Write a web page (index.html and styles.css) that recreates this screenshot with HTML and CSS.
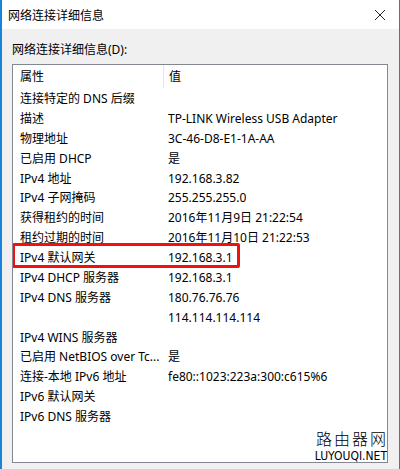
FILE: index.html
```html
<!DOCTYPE html>
<html lang="zh-CN">
<head>
  <meta charset="UTF-8">
  <title>网络连接详细信息</title>
  <link rel="stylesheet" href="styles.css">
</head>
<body>

<div class="window">
  <div class="titlebar">
    <span class="title">网络连接详细信息</span>
    <svg class="close" width="12" height="12" viewBox="0 0 12 12">
      <path d="M1 1 L11 11 M11 1 L1 11" stroke="#222" stroke-width="1" fill="none"/>
    </svg>
  </div>

  <div class="content">
    <div class="caption">网络连接详细信息(D):</div>
    <div class="listbox">
      <div class="row head">
        <div class="prop">属性</div>
        <div class="val">值</div>
      </div>
      <div class="row"><div class="prop">连接特定的 DNS 后缀</div><div class="val"></div></div>
      <div class="row"><div class="prop">描述</div><div class="val">TP-LINK Wireless USB Adapter</div></div>
      <div class="row"><div class="prop">物理地址</div><div class="val">3C-46-D8-E1-1A-AA</div></div>
      <div class="row"><div class="prop">已启用 DHCP</div><div class="val">是</div></div>
      <div class="row"><div class="prop">IPv4 地址</div><div class="val">192.168.3.82</div></div>
      <div class="row"><div class="prop">IPv4 子网掩码</div><div class="val">255.255.255.0</div></div>
      <div class="row"><div class="prop">获得租约的时间</div><div class="val">2016年11月9日 21:22:54</div></div>
      <div class="row"><div class="prop">租约过期的时间</div><div class="val">2016年11月10日 21:22:53</div></div>
      <div class="row mark"><div class="prop">IPv4 默认网关</div><div class="val">192.168.3.1</div></div>
      <div class="row"><div class="prop">IPv4 DHCP 服务器</div><div class="val">192.168.3.1</div></div>
      <div class="row"><div class="prop">IPv4 DNS 服务器</div><div class="val">180.76.76.76</div></div>
      <div class="row"><div class="prop"></div><div class="val">114.114.114.114</div></div>
      <div class="row"><div class="prop">IPv4 WINS 服务器</div><div class="val"></div></div>
      <div class="row"><div class="prop">已启用 NetBIOS over Tc...</div><div class="val">是</div></div>
      <div class="row"><div class="prop">连接-本地 IPv6 地址</div><div class="val">fe80::1023:223a:300:c615%6</div></div>
      <div class="row"><div class="prop">IPv6 默认网关</div><div class="val"></div></div>
      <div class="row"><div class="prop">IPv6 DNS 服务器</div><div class="val"></div></div>

      <div class="watermark">
        <div class="wm-cn">路由器网</div>
        <div class="wm-en">LUYOUQI.NET</div>
      </div>
    </div>
  </div>
</div>

</body>
</html>
```

FILE: styles.css
```css
body {
  margin: 0;
  font-family: "Noto Sans", "Noto Sans CJK SC", sans-serif;
  font-size: 12px;
  color: #000;
  background: #f0f0f0;
}
.window {
  width: 400px;
  height: 469px;
  box-sizing: border-box;
  border-left: 2px solid #1883d7;
  border-right: 1px solid #1883d7;
  background: #f0f0f0;
  overflow: hidden;
}
.titlebar {
  height: 29px;
  background: #fff;
  display: flex;
  align-items: center;
  justify-content: space-between;
  padding: 0 13px 0 6px;
}
.title {
  font-size: 12px;
  color: #000;
}
.close {
  display: block;
}
.content {
  padding: 12px 11px 0 10px;
}
.caption {
  height: 23px;
  line-height: 18px;
}
.listbox {
  position: relative;
  height: 397px;
  background: #fff;
  border: 1px solid #828790;
  overflow: hidden;
}
.row {
  display: flex;
  height: 19.875px;
  line-height: 21px;
  white-space: nowrap;
}
.row.head {
  height: 23px;
  line-height: 23px;
}
.prop {
  width: 143px;
  padding-left: 7px;
  flex-shrink: 0;
}
.val {
  padding-left: 5px;
}
.head .prop {
  border-right: 1px solid #e5e5e5;
}
.mark {
  position: relative;
}
.mark::after {
  content: "";
  position: absolute;
  left: -1px;
  top: -4px;
  width: 222px;
  height: 19px;
  border: 3px solid #f01010;
  border-radius: 2px;
}
.watermark {
  position: absolute;
  right: 0;
  bottom: 0;
  background: #fff;
  padding: 2px 0 0 4px;
  text-align: right;
}
.wm-cn {
  font-family: "Noto Sans CJK SC", sans-serif;
  font-size: 16px;
  font-weight: 300;
  letter-spacing: 2px;
  line-height: 19px;
  margin-right: -1px;
}
.wm-en {
  font-family: "DejaVu Sans Condensed", "Liberation Sans Narrow", sans-serif;
  font-size: 12px;
  line-height: 12px;
  margin-top: 2px;
}
```
